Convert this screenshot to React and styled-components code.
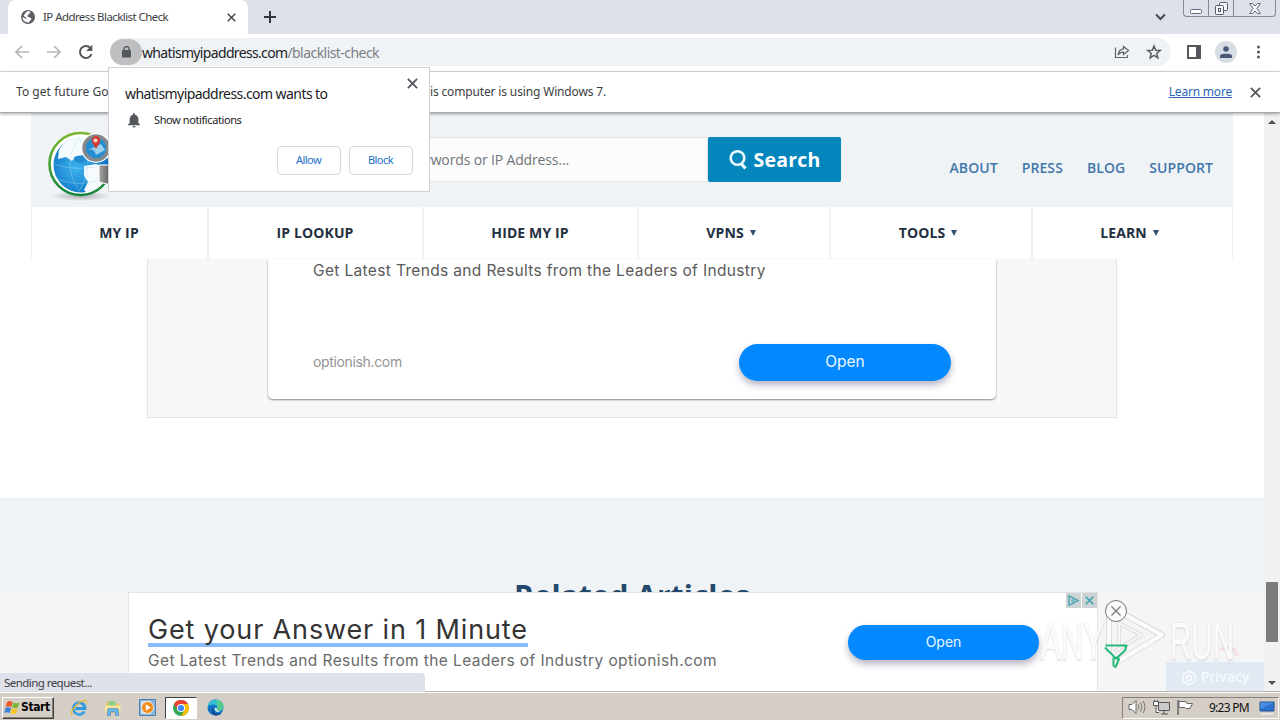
import React from "react";
import styled, { createGlobalStyle } from "styled-components";

const Global = createGlobalStyle`
  * { box-sizing: border-box; }
  html, body { margin: 0; padding: 0; width: 1280px; height: 720px; overflow: hidden; background: #fff; }
  button { padding: 0; margin: 0; border: 0; background: none; font: inherit; }
  svg { display: block; }
`;

const ui = `"DejaVu Sans Condensed", "Noto Sans", sans-serif`;
const thin = `"Noto Sans", sans-serif`;

const Screen = styled.div`
  position: relative;
  width: 1280px;
  height: 720px;
  display: flex;
  flex-direction: column;
  overflow: hidden;
  font-family: ${thin};
  color: #222;
`;

const Label = styled.span`
  white-space: nowrap;
  font-family: ${(p) => p.$font || thin};
  font-size: ${(p) => p.$size}px;
  font-weight: ${(p) => p.$weight || 400};
  letter-spacing: ${(p) => p.$track || 0}px;
  color: ${(p) => p.$color || "#222"};
  line-height: 1.3;
`;

/* ---- browser chrome ---- */
const TabStrip = styled.header`
  flex: none;
  height: 34px;
  background: #dee1e9;
  display: flex;
  padding-left: 8px;
`;
const Tab = styled.div`
  width: 240px;
  height: 34px;
  background: #fff;
  border-radius: 8px 8px 0 0;
  display: flex;
  align-items: center;
  padding: 0 12px 0 13px;
`;
const TabTitle = styled.div`
  flex: 1;
  padding-left: 8px;
  display: flex;
`;
const NewTab = styled.button`
  width: 44px;
  height: 34px;
  display: flex;
  align-items: center;
  justify-content: center;
`;
const TabSpacer = styled.div`
  flex: 1;
`;
const TabSearch = styled.div`
  width: 28px;
  padding: 13px 0 0 0;
  display: flex;
  align-items: flex-start;
`;
const WindowButtons = styled.div`
  width: 93px;
  height: 17px;
  margin-right: 4px;
  border: 1px solid #858994;
  border-top: 0;
  border-radius: 0 0 4px 4px;
  display: flex;
`;
const WindowButton = styled.button`
  width: ${(p) => p.$w}px;
  display: flex;
  align-items: center;
  justify-content: center;
  border-right: ${(p) => (p.$last ? 0 : 1)}px solid #858994;
`;

const Toolbar = styled.div`
  flex: none;
  height: 38px;
  background: #fff;
  border-bottom: 1px solid #d8dadd;
  display: flex;
  align-items: center;
  padding: 0 13px 1px 14px;
`;
const NavIcons = styled.div`
  display: flex;
  width: 96px;
  gap: 17px;
  align-items: center;
`;
const Omnibox = styled.div`
  flex: 1;
  height: 28px;
  border-radius: 14px;
  background: #f0f3f6;
  display: flex;
  align-items: center;
`;
const LockChip = styled.div`
  width: 32px;
  height: 26px;
  border-radius: 13px;
  background: #bdbfc1;
  display: flex;
  align-items: center;
  justify-content: center;
`;
const Url = styled.div`
  flex: 1;
  display: flex;
  padding-top: 2px;
`;
const OmniActions = styled.div`
  display: flex;
  gap: 16px;
  padding-right: 9px;
`;
const ToolbarActions = styled.div`
  display: flex;
  align-items: center;
  gap: 14px;
  width: 96px;
  padding-left: 16px;
`;
const Avatar = styled.div`
  width: 22px;
  height: 22px;
  border-radius: 50%;
  background: #d9dde6;
  display: flex;
  align-items: center;
  justify-content: center;
`;

const InfoBar = styled.div`
  flex: none;
  height: 41px;
  background: #fff;
  border-bottom: 1px solid #a4a8ab;
  display: flex;
  align-items: center;
  justify-content: space-between;
  padding: 0 19px 0 16px;
  box-shadow: 0 1px 3px rgba(0, 0, 0, 0.35);
  position: relative;
  z-index: 2;
`;
const InfoText = styled.div`
  display: flex;
  width: 800px;
`;
const InfoLead = styled.div`
  width: 411px;
  overflow: hidden;
  display: flex;
`;
const InfoActions = styled.div`
  display: flex;
  align-items: center;
  gap: 18px;
`;
const LearnMore = styled(Label)`
  text-decoration: underline;
`;

/* ---- permission popup ---- */
const Popup = styled.section`
  position: absolute;
  z-index: 5;
  left: 108px;
  top: 67px;
  width: 322px;
  height: 125px;
  background: #fff;
  border: 1px solid #cfd1d4;
  padding: 8px 16px 0 16px;
`;
const PopupHead = styled.div`
  display: flex;
  justify-content: space-between;
  height: 33px;
`;
const PopupTitle = styled.div`
  padding-top: 6px;
`;
const PopupClose = styled.div`
  padding-top: 2px;
  margin-right: -5px;
`;
const PermissionRow = styled.div`
  height: 23px;
  padding-left: 2px;
  display: flex;
  align-items: center;
  gap: 13px;
`;
const PopupButtons = styled.div`
  display: flex;
  justify-content: flex-end;
  gap: 8px;
  padding-top: 14px;
`;
const PopupButton = styled.button`
  width: 64px;
  height: 29px;
  border: 1px solid #d5d8dc;
  border-radius: 4px;
  display: flex;
  align-items: center;
  justify-content: center;
  padding: 0 1px 1px 0;
`;

/* ---- web page ---- */
const Viewport = styled.div`
  flex: 1;
  min-height: 0;
  display: flex;
`;
const Page = styled.main`
  width: 1264px;
  display: flex;
  flex-direction: column;
  overflow: hidden;
  background: #fff;
`;
const SiteHeader = styled.div`
  flex: none;
  width: 1202px;
  margin-left: 31px;
  height: 94px;
  background: #eff3f6;
  display: flex;
  padding: 0 20px 0 16px;
`;
const LogoSlot = styled.div`
  width: 262px;
  padding-top: 17px;
`;
const SearchField = styled.div`
  width: 399px;
  height: 45px;
  margin-top: 24px;
  background: #fcfcfc;
  border: 1px solid #e4e6e8;
  display: flex;
  align-items: center;
  padding: 2px 0 0 60px;
`;
const SearchButton = styled.button`
  width: 133px;
  height: 45px;
  margin-top: 24px;
  background: #0486bd;
  border-radius: 2px;
  display: flex;
  align-items: center;
  justify-content: center;
  gap: 6px;
`;
const TopLinks = styled.nav`
  flex: 1;
  display: flex;
  justify-content: flex-end;
  gap: 24px;
  padding-top: 46px;
`;
const MainNav = styled.nav`
  flex: none;
  width: 1202px;
  margin-left: 31px;
  height: 52px;
  display: flex;
  background: #fff;
  border-left: 1px solid #eff1f4;
`;
const NavCell = styled.div`
  width: ${(p) => p.$w}px;
  display: flex;
  align-items: center;
  justify-content: center;
  gap: 6px;
  padding-right: ${(p) => (p.$more ? 6 : 1)}px;
  border-right: ${(p) => (p.$last ? 1 : 2)}px solid #eff1f4;
`;
const Caret = styled.i`
  border: 3px solid transparent;
  border-top: 6px solid #31506f;
  border-bottom: 0;
`;
const AdFrame = styled.section`
  flex: none;
  width: 970px;
  height: 159px;
  margin-left: 147px;
  background: #f7f7f7;
  border: 1px solid #e3e3e3;
  border-top: 0;
  padding: 0 0 0 120px;
`;
const AdCard = styled.div`
  width: 728px;
  height: 140px;
  background: #fff;
  border-radius: 0 0 5px 5px;
  box-shadow: 0 1px 2px rgba(0, 0, 0, 0.45);
  padding: 0 45px;
`;
const AdLine = styled.div`
  height: 85px;
  display: flex;
  align-items: flex-start;
  padding-top: 2px;
`;
const AdBottom = styled.div`
  display: flex;
  justify-content: space-between;
  align-items: center;
  height: 37px;
`;
const OpenButton = styled.button`
  width: ${(p) => p.$w}px;
  height: ${(p) => p.$h}px;
  border-radius: 19px;
  background: #0288ff;
  box-shadow: 0 4px 7px rgba(40, 40, 90, 0.35);
  display: flex;
  align-items: center;
  justify-content: center;
`;
const Articles = styled.section`
  flex: none;
  height: 94px;
  margin-top: 80px;
  background: #eff3f6;
  overflow: hidden;
  display: flex;
  justify-content: center;
  padding-top: 78px;
`;
const Anchor = styled.section`
  flex: 1;
  display: flex;
  background: #f5f5f5;
  padding-left: 128px;
`;
const Banner = styled.div`
  width: 970px;
  background: #fff;
  border: 1px solid #e2e4e7;
  border-bottom: 0;
  display: flex;
`;
const BannerText = styled.div`
  width: 719px;
  padding: 19px 0 0 19px;
  display: flex;
  flex-direction: column;
  align-items: flex-start;
`;
const BannerHead = styled.div`
  height: 35px;
  display: flex;
  align-items: center;
  padding-top: 4px;
  border-bottom: 4px solid #87bbfb;
  margin-bottom: 4px;
`;
const BannerAction = styled.div`
  width: 218px;
  padding-top: 32px;
`;
const AdBadges = styled.div`
  display: flex;
  gap: 1px;
  height: 15px;
`;
const AdBadge = styled.div`
  width: 15px;
  height: 15px;
  background: #cdd2d5;
  display: flex;
  align-items: center;
  justify-content: center;
`;
const AnchorSide = styled.div`
  flex: 1;
  display: flex;
  flex-direction: column;
  align-items: flex-end;
  justify-content: flex-end;
`;
const Privacy = styled.div`
  width: 98px;
  height: 29px;
  background: #e1e9f2;
  display: flex;
  align-items: center;
  justify-content: center;
  gap: 4px;
  padding-top: 2px;
`;
const ScrollBar = styled.div`
  width: 16px;
  background: #f1f1f1;
  display: flex;
  flex-direction: column;
  align-items: center;
`;
const ScrollArrow = styled.div`
  height: 17px;
  display: flex;
  align-items: center;
`;
const ScrollTrack = styled.div`
  flex: 1;
  padding-top: 452px;
`;
const ScrollThumb = styled.div`
  width: 12px;
  height: 60px;
  background: #7c7c7c;
`;
const StatusBubble = styled.div`
  position: absolute;
  z-index: 4;
  left: 0;
  top: 673px;
  width: 425px;
  height: 19px;
  background: #dee1e9;
  border-top-right-radius: 4px;
  padding: 3px 4px;
  display: flex;
`;
const Watermark = styled.svg`
  position: absolute;
  z-index: 6;
  left: 1036px;
  top: 596px;
`;

/* ---- taskbar ---- */
const TaskBar = styled.footer`
  flex: none;
  height: 29px;
  background: #d5cec6;
  border-top: 1px solid #b9b7b4;
  box-shadow: inset 0 1px 0 #fff;
  display: flex;
  align-items: center;
  padding: 3px 1px 0 2px;
`;
const StartButton = styled.button`
  width: 52px;
  height: 22px;
  background: #d5cec6;
  border: 1px solid;
  border-color: #fff #404040 #404040 #fff;
  box-shadow: inset -1px -1px 0 #858079;
  display: flex;
  align-items: center;
  gap: 1px;
  padding-left: 1px;
`;
const QuickLaunch = styled.div`
  flex: 1;
  display: flex;
  align-items: center;
  padding-left: 8px;
`;
const TaskSlot = styled.div`
  width: ${(p) => (p.$active ? 32 : 34)}px;
  height: 22px;
  display: flex;
  align-items: center;
  justify-content: center;
  ${(p) =>
    p.$active &&
    `background: #fff; margin: 0 1px; border: 1px solid; border-color: #404040 #fff #fff #404040;`}
`;
const Tray = styled.div`
  width: 157px;
  height: 22px;
  border: 1px solid;
  border-color: #858079 #fff #fff #858079;
  display: flex;
  align-items: center;
  padding-left: 5px;
`;
const TrayIcons = styled.div`
  display: flex;
  gap: 7px;
  width: 81px;
`;
const Clock = styled.div`
  width: 50px;
  display: flex;
`;

function Cross({ size, color, w }) {
  return (
    <svg width={size} height={size} viewBox="0 0 10 10" stroke={color} strokeWidth={w} fill="none">
      <path d="M.8.8 9.2 9.2M9.2.8.8 9.2" />
    </svg>
  );
}

function GlobeIcon() {
  return (
    <svg width="14" height="14" viewBox="0 0 14 14">
      <circle cx="7" cy="7" r="7" fill="#5b5e63" />
      <path d="M6.5 1.3C8 1 9.500 1.600 9.300 2.500 9.200 3.400 7.800 3.400 7.700 4.300c-.1.8-1.100.7-1.300 1.600-.2.8.8.9 1.700 1 .9.200.8 1.100 1.800 1.200.8.100.6 1.600-.2 2-.8.400-.8 1.800-1.800 2.300C4.100 12.600 1.400 10.300 1.500 7c1 .8 2 .7 2.600 1.400.5.700 1.200.6 1.300-.2C5.300 7 3.600 6.800 2.800 6c-.5-.5.3-1.100.8-1.700C4.200 3.500 5 2 6.500 1.300z" fill="#fff" />
    </svg>
  );
}

function SiteLogo() {
  return (
    <svg width="78" height="74" viewBox="0 0 78 74">
      <defs>
        <radialGradient id="sea" cx=".4" cy=".55" r=".6">
          <stop offset="0" stopColor="#3db4ee" />
          <stop offset="1" stopColor="#0a6cc0" />
        </radialGradient>
        <radialGradient id="shade">
          <stop offset="0" stopColor="#a9adac" />
          <stop offset="1" stopColor="#eff3f6" />
        </radialGradient>
        <linearGradient id="ring" x1="0" y1="0" x2="0" y2="1">
          <stop offset="0" stopColor="#7cb82f" />
          <stop offset="1" stopColor="#12863f" />
        </linearGradient>
        <linearGradient id="grip" x1="0" x2="1">
          <stop offset="0" stopColor="#a9a9a9" />
          <stop offset="1" stopColor="#555" />
        </linearGradient>
      </defs>
      <ellipse cx="34" cy="66" rx="30" ry="5" fill="url(#shade)" />
      <circle cx="33.500" cy="34" r="31" fill="#fff" stroke="url(#ring)" strokeWidth="2.600" />
      <circle cx="34" cy="35" r="27.500" fill="url(#sea)" />
      <path d="M12 20C17 11 26 6 40 7l-3 8 2 6-2 4-8 1-4 5-6-4-8 2zM37 36l12-2 9 3 1 12-8 9-11 5-3-3 4-8-4-6z" fill="#f5fafc" />
      <path d="M27 27l8-1 4 4-4 3-6-1z" fill="#208acf" />
      <path d="M6 34q26 9 53 0M10 49q22 9 44 0M32 8q-18 25 0 53M32 8q18 25 0 53" fill="none" stroke="#a8dbf5" strokeWidth=".6" opacity=".65" />
      <path d="M52 35h12v20l-12-3z" fill="url(#grip)" stroke="#fff" />
      <circle cx="49" cy="18" r="15" fill="#fff" />
      <circle cx="49" cy="18" r="12" fill="#258ed0" stroke="#85888b" strokeWidth="3.500" />
      <path d="M41 20q6-2 8 5l9-5-4-6z" fill="#cfeafa" opacity=".7" />
      <path d="M49 19l-4-7a4.300 4.300 0 1 1 8 0z" fill="#d9372c" />
      <circle cx="48.500" cy="10.500" r="2" fill="#f7d6d0" />
    </svg>
  );
}

function StartFlag() {
  return (
    <svg width="16" height="16" viewBox="0 0 16 16">
      <path d="M3 2q3-2 5.500 0L7.300 7Q5 5.500 1.700 7z" fill="#ea5b27" />
      <path d="M9.300 2.500q3 1.500 6 0l-1.500 5q-3 1.200-5.700-.2z" fill="#7cb637" />
      <path d="M1.500 8Q4 6.500 7 8l-1.300 5Q3 11.700.2 13z" fill="#3a83d8" />
      <path d="M7.800 8.300q3 1.400 5.800.2l-1.400 5q-3 1.300-5.700-.3z" fill="#f6c52b" />
    </svg>
  );
}

function IeIcon() {
  return (
    <svg width="18" height="18" viewBox="0 0 18 18" fill="none">
      <path d="M14.300 12.300A5.800 5.800 0 1 1 15 9.500H5.500" stroke="#2f9be0" strokeWidth="2.800" />
      <path d="M13.500 12A5 5 0 0 1 5 12" stroke="#76c8f5" strokeWidth="1" />
      <path d="M2.300 16C-.5 14 4 7 9.500 3.500 13 1.200 17 .600 16.500 3.600" stroke="#e9b73a" strokeWidth="1.400" />
    </svg>
  );
}

function FolderIcon() {
  return (
    <svg width="18" height="18" viewBox="0 0 18 18">
      <path d="M2 3h5l1 1.500h7.500V14H2z" fill="#e6c765" />
      <path d="M4.500 2h7v5h-7z" fill="#8fce87" />
      <path d="M1 6.500h15.500v7H1z" fill="#f6e39c" />
      <path d="M3.500 16.500V11q0-1.500 1.500-1.500h8q1.500 0 1.500 1.500v5.500h-3V13h-5v3.500z" fill="#6db4e3" stroke="#4286bc" strokeWidth=".6" />
    </svg>
  );
}

function MediaIcon() {
  return (
    <svg width="17" height="17" viewBox="0 0 17 17">
      <path d="M.5.5h16v16H.5z" fill="#86b6dc" stroke="#4d80ae" />
      <path d="M2 2h10v13H2z" fill="#c8e0f1" />
      <circle cx="8.500" cy="8.500" r="6" fill="#f28c1b" stroke="#fff" strokeWidth=".7" />
      <path d="M6.800 5.200v6.600l5-3.300z" fill="#fff" />
    </svg>
  );
}

function ChromeIcon() {
  return (
    <svg width="16" height="16" viewBox="0 0 16 16">
      <circle cx="8" cy="8" r="8" fill="#34a853" />
      <path d="M1.070 4A8 8 0 0 1 14.930 4H8L4.540 10z" fill="#ea4335" />
      <path d="M14.930 4A8 8 0 0 1 8 16l3.460-6L8 4z" fill="#fbbc05" />
      <circle cx="8" cy="8" r="4" fill="#fff" />
      <circle cx="8" cy="8" r="3.100" fill="#4285f4" />
    </svg>
  );
}

function EdgeIcon() {
  return (
    <svg width="17" height="17" viewBox="0 0 17 17">
      <circle cx="8.500" cy="8.500" r="8" fill="#1272c4" />
      <path d="M.7 7.500C1.500 2.500 5 .5 8.500.5c4.500 0 8 3 8 7 0 3-2 4.500-4.500 4.500s-3-1-2.300-2C11 8 9 5.500 6.500 5.500 3.500 5.500 1.500 6.500.7 7.500z" fill="#39bfd5" />
      <path d="M10 1c4 .5 6.500 3.500 6.500 6.500 0 3-2 4.500-4.500 4.500s-3-1-2.300-2C11.500 7.500 9 5 10 1z" fill="#63cf70" opacity=".7" />
      <path d="M6.500 8c-2 3 1 7 5 6.800 1.600 0 3-.6 3.700-1.300-1.500 2.200-3.800 3-6 3C5 16.500 3 11 6.500 8z" fill="#153f8c" />
      <path d="M10 9.500c-1 1.500.5 3 3 2.500-2 2-6 .5-5-3.500z" fill="#e6f3f6" />
    </svg>
  );
}

const navItems = [
  ["MY IP", 177],
  ["IP LOOKUP", 215],
  ["HIDE MY IP", 215],
  ["VPNS", 192, true],
  ["TOOLS", 202, true],
  ["LEARN", 200, true],
];

export default function App() {
  return (
    <Screen>
      <Global />
      <TabStrip>
        <Tab>
          <GlobeIcon />
          <TabTitle>
            <Label $size={11.5} $track={-0.57} $color="#3c4043">IP Address Blacklist Check</Label>
          </TabTitle>
          <Cross size={9} color="#3f4247" w={1.6} />
        </Tab>
        <NewTab>
          <svg width="12" height="12" viewBox="0 0 12 12" stroke="#34373c" strokeWidth="2"><path d="M6 0v12M0 6h12" /></svg>
        </NewTab>
        <TabSpacer />
        <TabSearch>
          <svg width="11" height="8" viewBox="0 0 11 8" fill="none" stroke="#46494e" strokeWidth="2"><path d="M1 1.500l4.500 4.500L10 1.500" /></svg>
        </TabSearch>
        <WindowButtons>
          <WindowButton $w={25}>
            <svg width="12" height="14" viewBox="0 0 12 14"><rect x=".5" y="8.500" width="11" height="4" rx="1" fill="#fff" stroke="#666a76" /></svg>
          </WindowButton>
          <WindowButton $w={25}>
            <svg width="13" height="13" viewBox="0 0 13 13" fill="#f5f6fa" stroke="#565a66">
              <rect x="4.500" y=".5" width="8" height="8" rx="1" />
              <rect x=".5" y="3.500" width="8" height="9" rx="1" />
              <rect x="3.500" y="6.500" width="2" height="3" />
            </svg>
          </WindowButton>
          <WindowButton $w={41} $last>
            <svg width="12" height="11" viewBox="0 0 12 11" fill="#f5f6fa" stroke="#666a76">
              <path d="M.7.5h3L6 3 8.300.5h3L8 5.500l3.300 5h-3L6 8l-2.300 2.500h-3L4 5.500z" />
            </svg>
          </WindowButton>
        </WindowButtons>
      </TabStrip>

      <Toolbar>
        <NavIcons>
          <svg width="15" height="14" viewBox="0 0 15 14" fill="none" stroke="#b3b5b8" strokeWidth="1.700"><path d="M15 7H2M8 1L2 7l6 6" /></svg>
          <svg width="15" height="14" viewBox="0 0 15 14" fill="none" stroke="#b3b5b8" strokeWidth="1.700"><path d="M1 7h13M8 1l6 6-6 6" /></svg>
          <svg width="16" height="16" viewBox="0 0 16 16"><path d="M13.600 10A6 6 0 1 1 12.500 4" fill="none" stroke="#54575c" strokeWidth="2" /><path d="M14.300.8V7H8.200z" fill="#54575c" /></svg>
        </NavIcons>
        <Omnibox>
          <LockChip>
            <svg width="9" height="12" viewBox="0 0 9 12"><rect y="4" width="9" height="7.500" rx="1" fill="#54575b" /><path d="M2 4.500V3a2.500 2.500 0 0 1 5 0v1.500" fill="none" stroke="#54575b" strokeWidth="1.300" /></svg>
          </LockChip>
          <Url>
            <Label $size={14} $track={-0.66} $color="#202124">whatismyipaddress.com</Label>
            <Label $size={14} $track={-0.55} $color="#7b8085">/blacklist-check</Label>
          </Url>
          <OmniActions>
            <svg width="16" height="16" viewBox="0 0 16 16" fill="none" stroke="#5f6368" strokeWidth="1.200"><path d="M1.500 3.500v10h12v-2.500" /><path d="M9.500 2.500l5 4-5 4V8.200Q6 8 4 11q.5-5.500 5.500-6.200z" /></svg>
            <svg width="16" height="16" viewBox="0 0 16 16" fill="none" stroke="#5a5e63" strokeWidth="1.500"><path d="M8 2l1.700 4.200 4.500.3-3.500 2.900 1.200 4.400L8 11.400l-3.900 2.400 1.200-4.400L1.800 6.500l4.500-.3z" /></svg>
          </OmniActions>
        </Omnibox>
        <ToolbarActions>
          <svg width="14" height="14" viewBox="0 0 14 14"><path d="M1 1h12v12H1z" fill="#fff" stroke="#54575c" strokeWidth="2" /><path d="M9 0h5v14H9z" fill="#54575c" /></svg>
          <Avatar>
            <svg width="12" height="12" viewBox="0 0 12 12" fill="#4c5a78"><circle cx="6" cy="3" r="2.800" /><path d="M0 12V9.500C0 7 12 7 12 9.500V12z" /></svg>
          </Avatar>
          <svg width="14" height="14" viewBox="0 0 14 14" fill="#54575c"><circle cx="7.500" cy="2" r="1.500" /><circle cx="7.500" cy="7" r="1.500" /><circle cx="7.500" cy="12" r="1.500" /></svg>
        </ToolbarActions>
      </Toolbar>

      <InfoBar>
        <InfoText>
          <InfoLead>
            <Label $size={12} $track={0.05} $color="#3c4043">To get future Google Chrome updates, you'll need Windows 10 or later. Th</Label>
          </InfoLead>
          <Label $size={12} $track={-0.15} $color="#3c4043">&nbsp;is computer is using Windows 7.</Label>
        </InfoText>
        <InfoActions>
          <LearnMore $size={12} $track={-0.2} $color="#2a66b8">Learn more</LearnMore>
          <Cross size={11} color="#55585c" w={1.7} />
        </InfoActions>
      </InfoBar>

      <Viewport>
        <Page>
          <SiteHeader>
            <LogoSlot><SiteLogo /></LogoSlot>
            <SearchField>
              <Label $size={14} $track={-0.15} $font={`"Open Sans"`} $color="#707478">Enter Keywords or IP Address...</Label>
            </SearchField>
            <SearchButton>
              <svg width="19" height="22" viewBox="0 0 19 22" fill="none" stroke="#eafaff" strokeWidth="2.600"><circle cx="8.500" cy="9" r="6.800" /><path d="M12 14.500l4.500 5" strokeWidth="3.300" /></svg>
              <Label $size={19.5} $weight={700} $track={0.2} $font={`"Open Sans"`} $color="#fff">Search</Label>
            </SearchButton>
            <TopLinks>
              {["ABOUT", "PRESS", "BLOG", "SUPPORT"].map((t) => (
                <Label key={t} $size={14} $weight={600} $track={0.08} $font={`"Open Sans"`} $color="#3f77ab">{t}</Label>
              ))}
            </TopLinks>
          </SiteHeader>
          <MainNav>
            {navItems.map(([t, w, more], i) => (
              <NavCell key={t} $w={w} $more={more} $last={i === 5}>
                <Label $size={14} $weight={700} $track={0.12} $font={`"Open Sans"`} $color="#232f40">{t}</Label>
                {more && <Caret />}
              </NavCell>
            ))}
          </MainNav>
          <AdFrame>
            <AdCard>
              <AdLine>
                <Label $size={15.5} $track={0.35} $font="Inter" $color="#5a5a5a">Get Latest Trends and Results from the Leaders of Industry</Label>
              </AdLine>
              <AdBottom>
                <Label $size={14} $font="Inter" $track={-0.35} $color="#939393">optionish.com</Label>
                <OpenButton $w={212} $h={37}>
                  <Label $size={15.5} $font="Inter" $color="#eaf7ff">Open</Label>
                </OpenButton>
              </AdBottom>
            </AdCard>
          </AdFrame>
          <Articles>
            <Label $size={30} $weight={700} $font={`"Open Sans"`} $color="#24486c">Related Articles</Label>
          </Articles>
          <Anchor>
            <Banner>
              <BannerText>
                <BannerHead>
                  <Label $size={27} $track={0.86} $font="Inter" $color="#333">Get your Answer in 1 Minute</Label>
                </BannerHead>
                <Label $size={15.5} $track={0.4} $font="Inter" $color="#6a6a6a">Get Latest Trends and Results from the Leaders of Industry optionish.com</Label>
              </BannerText>
              <BannerAction>
                <OpenButton $w={191} $h={35}>
                  <Label $size={14} $font="Inter" $color="#eaf7ff">Open</Label>
                </OpenButton>
              </BannerAction>
              <AdBadges>
                <AdBadge>
                  <svg width="11" height="11" viewBox="0 0 11 11" fill="none" stroke="#36a3b0" strokeWidth="1.300"><path d="M1 1v9.300l9-4.800z" /><path d="M4 4.300v2.500l2.300-1.300z" strokeWidth=".8" /></svg>
                </AdBadge>
                <AdBadge><Cross size={9} color="#36a3b0" w={1.7} /></AdBadge>
              </AdBadges>
            </Banner>
            <AnchorSide>
              <Privacy>
                <svg width="16" height="16" viewBox="0 0 16 16" fill="none" stroke="#f7fafd" strokeWidth="1.500"><path d="M8 1l6 3.500v7L8 15l-6-3.500v-7z" /><circle cx="8" cy="8" r="2.600" /></svg>
                <Label $size={14} $weight={600} $font={`"Open Sans"`} $color="#f7fafd">Privacy</Label>
              </Privacy>
            </AnchorSide>
          </Anchor>
        </Page>
        <ScrollBar>
          <ScrollArrow><svg width="8" height="4" viewBox="0 0 8 4"><path d="M0 4l4-4 4 4z" fill="#505050" /></svg></ScrollArrow>
          <ScrollTrack><ScrollThumb /></ScrollTrack>
          <ScrollArrow><svg width="8" height="4" viewBox="0 0 8 4"><path d="M0 0l4 4 4-4z" fill="#505050" /></svg></ScrollArrow>
        </ScrollBar>
      </Viewport>

      <TaskBar>
        <StartButton>
          <StartFlag />
          <Label $size={12} $weight={700} $track={-0.4} $font={ui} $color="#000">Start</Label>
        </StartButton>
        <QuickLaunch>
          <TaskSlot><IeIcon /></TaskSlot>
          <TaskSlot><FolderIcon /></TaskSlot>
          <TaskSlot><MediaIcon /></TaskSlot>
          <TaskSlot $active><ChromeIcon /></TaskSlot>
          <TaskSlot><EdgeIcon /></TaskSlot>
        </QuickLaunch>
        <Tray>
          <TrayIcons>
            <svg width="18" height="14" viewBox="0 0 18 14" stroke="#666"><path d="M1 4.500h3l4-4v13l-4-4H1z" fill="#fff" /><path d="M10 4.500q2 2.500 0 5M12.500 2.500q3 4.500 0 9M15 1q4 6 0 12" fill="none" stroke="#77736e" /></svg>
            <svg width="17" height="15" viewBox="0 0 17 15" fill="#fff" stroke="#555"><path d="M5.500 2.500h11v8h-11zM8 14h7M11 10.500V14" fill="#c9c9c9" /><path d="M.5 1.500h5v4h-5zM3 5.500v7h3M1.500 0v1.500M4.500 0v1.500" /></svg>
            <svg width="17" height="15" viewBox="0 0 17 15" fill="#fff" stroke="#666"><path d="M1 0v15" strokeWidth="1.500" /><path d="M2 1.500h7l1 2h5.500L13 8.500H9l-1-1H2z" /></svg>
          </TrayIcons>
          <Clock><Label $size={12} $track={-0.75} $font={thin} $color="#111">9:23 PM</Label></Clock>
          <svg width="16" height="14" viewBox="0 0 16 14"><path d="M1 1h14v9H1z" fill="#2e72cf" stroke="#214e90" /><path d="M1.500 8L14 1.500H1.500z" fill="#4b91e3" /><path d="M2 12h12v1.500H2z" fill="#e8eef5" /></svg>
        </Tray>
      </TaskBar>

      <StatusBubble><Label $size={11.5} $track={-0.55} $color="#3c4043">Sending request...</Label></StatusBubble>

      <Popup>
        <PopupHead>
          <PopupTitle><Label $size={14} $track={-0.56} $color="#202124">whatismyipaddress.com wants to</Label></PopupTitle>
          <PopupClose><Cross size={11} color="#55585c" w={1.7} /></PopupClose>
        </PopupHead>
        <PermissionRow>
          <svg width="14" height="15" viewBox="0 0 14 15" fill="#55585c"><path d="M7 0a1 1 0 0 1 1 1v.7c2.300.5 3.400 2.300 3.400 4.600V10L13 11.500v.8H1v-.8L2.600 10V6.300C2.600 4 3.700 2.200 6 1.700V1a1 1 0 0 1 1-1zM5.500 13h3a1.500 1.500 0 0 1-3 0z" /></svg>
          <Label $size={11} $track={-0.4} $color="#202124">Show notifications</Label>
        </PermissionRow>
        <PopupButtons>
          <PopupButton><Label $size={11} $track={-0.55} $color="#1a6fc9">Allow</Label></PopupButton>
          <PopupButton><Label $size={11} $track={-0.55} $color="#1a6fc9">Block</Label></PopupButton>
        </PopupButtons>
      </Popup>

      <Watermark width="210" height="84" viewBox="0 0 210 84" fill="none">
        <path d="M184 54q14-6 17 6" stroke="#f3e2e3" strokeWidth="4" />
        <g fontFamily='"Liberation Sans Narrow", "Liberation Sans", sans-serif' fontSize="52">
          <text x="4" y="64" textLength="64" lengthAdjust="spacingAndGlyphs" fill="#c4c4c8" fillOpacity=".25" stroke="#c4c4c8" strokeOpacity=".25" strokeWidth="3">ANY</text>
          <text x="134" y="64" textLength="64" lengthAdjust="spacingAndGlyphs" fill="#c4c4c8" fillOpacity=".25" stroke="#c4c4c8" strokeOpacity=".25" strokeWidth="3">RUN</text>
          <text x="4" y="62.500" textLength="64" lengthAdjust="spacingAndGlyphs" fill="#fff" fillOpacity=".9">ANY</text>
          <text x="134" y="62.500" textLength="64" lengthAdjust="spacingAndGlyphs" fill="#fff" fillOpacity=".9">RUN</text>
        </g>
        <g strokeLinejoin="round">
          <path d="M73 56V10l53 29-50 30" stroke="#d3d3d5" strokeWidth="6" />
          <path d="M73 56V10l53 29-50 30" stroke="#fafafa" strokeWidth="4.500" />
          <path d="M83 48V27l22 12-27 17" stroke="#dadadb" strokeWidth="4" />
          <path d="M83 48V27l22 12-27 17" stroke="#f6f6f6" strokeWidth="2.500" />
          <path d="M69.500 49.500h21l-1.500 5-9 8-11-11M80 62.500l3 .5-3.500 8-2-1.500v-8" stroke="#25b87b" strokeWidth="2" />
        </g>
        <circle cx="80" cy="15" r="10.500" fill="#fbfbfb" stroke="#777" />
        <path d="M75.500 10.500l9 9M84.500 10.500l-9 9" stroke="#777" strokeWidth="1.200" />
      </Watermark>
    </Screen>
  );
}
